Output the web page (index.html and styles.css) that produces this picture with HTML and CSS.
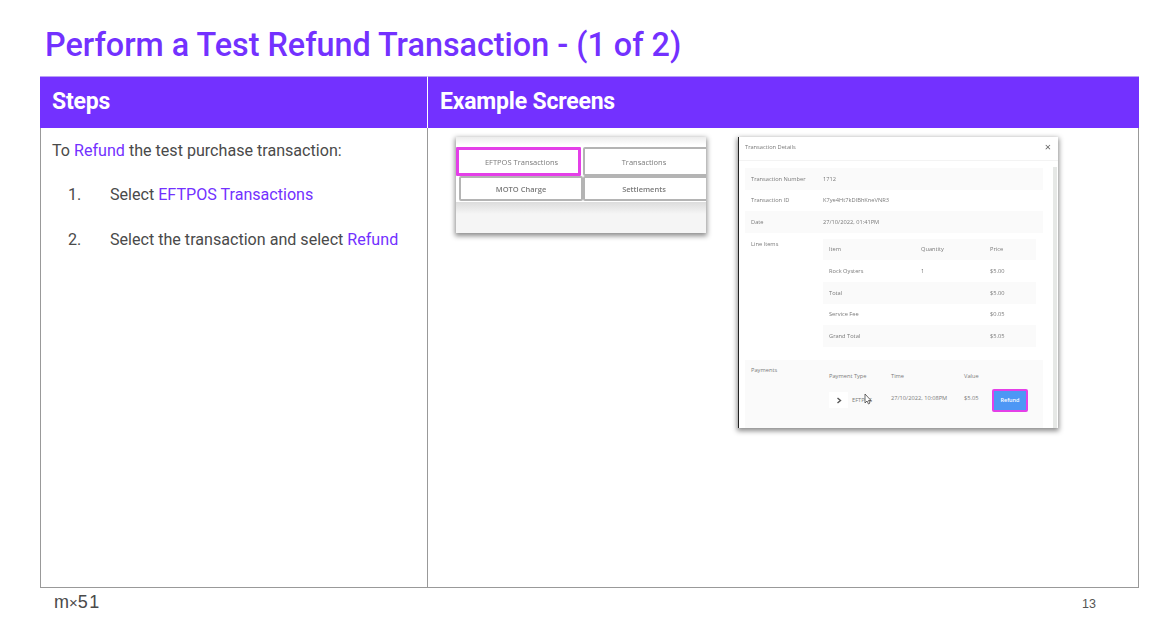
FILE: index.html
```html
<!DOCTYPE html>
<html lang="en">
<head>
<meta charset="utf-8">
<title>Perform a Test Refund Transaction</title>
<link rel="stylesheet" href="styles.css">
</head>
<body>
<main class="slide">
  <h1 class="title">Perform a Test Refund Transaction - (1 of 2)</h1>
  <section class="table">
    <div class="th th-steps">Steps</div>
    <div class="th th-screens">Example Screens</div>
    <div class="td td-steps">
      <p class="intro">To <span class="hl">Refund</span> the test purchase transaction:</p>
      <ol class="steps">
        <li><span class="num">1.</span><span>Select <span class="hl">EFTPOS Transactions</span></span></li>
        <li><span class="num">2.</span><span>Select the transaction and select <span class="hl">Refund</span></span></li>
      </ol>
    </div>
    <div class="td td-screens">
      <div class="shot menu-shot">
        <div class="menu-grid">
          <div class="menu-cell selected">EFTPOS Transactions</div>
          <div class="menu-cell right">Transactions</div>
          <div class="menu-cell strong">MOTO Charge</div>
          <div class="menu-cell right strong">Settlements</div>
        </div>
        <div class="menu-foot"></div>
      </div>
      <div class="shot dialog">
        <div class="dlg-head"><span>Transaction Details</span><span class="dlg-x">×</span></div>
        <div class="dlg-body">
          <div class="dlg-main">
            <div class="row band"><span>Transaction Number</span><span>1712</span></div>
            <div class="row"><span>Transaction ID</span><span>K7ye4Ht7kDIBhKneVNR3</span></div>
            <div class="row band"><span>Date</span><span>27/10/2022, 01:41PM</span></div>
            <div class="row line-items">
              <span class="li-label">Line Items</span>
              <div class="items">
                <div class="item band"><span>Item</span><span>Quantity</span><span>Price</span></div>
                <div class="item"><span>Rock Oysters</span><span>1</span><span>$5.00</span></div>
                <div class="item band"><span>Total</span><span></span><span>$5.00</span></div>
                <div class="item"><span>Service Fee</span><span></span><span>$0.05</span></div>
                <div class="item band"><span>Grand Total</span><span></span><span>$5.05</span></div>
              </div>
            </div>
            <div class="payments band">
              <span class="pay-label">Payments</span>
              <div class="pay-table">
                <div class="pay-row pay-head"><span>Payment Type</span><span>Time</span><span>Value</span></div>
                <div class="pay-row">
                  <span class="pay-type"><span class="chev"><svg width="6" height="7" viewBox="0 0 6 7"><path d="M1.5 1 L4.5 3.5 L1.5 6" fill="none" stroke="#555" stroke-width="1.4"/></svg></span>EFTPOS</span>
                  <span class="pay-time">27/10/2022, 10:08PM</span>
                  <span class="pay-time">$5.05</span>
                  <span class="refund">Refund</span>
                </div>
              </div>
              <svg class="cursor" width="8" height="12" viewBox="0 0 8 12"><path d="M1 1 V10 L3 8 L4.500 11 L6 10 L4.500 7.500 L7 7.500 Z" fill="#fff" stroke="#444" stroke-width="0.8"/></svg>
            </div>
          </div>
          <div class="scrollbar"></div>
        </div>
      </div>
    </div>
  </section>
  <footer class="footer">
    <span class="logo">m<span class="logo-x">×</span><span class="logo-num">51</span></span>
    <span class="page">13</span>
  </footer>
</main>
</body>
</html>
```
FILE: styles.css
```css
* { box-sizing: border-box; }
html, body { margin: 0; padding: 0; background: #fff; }
body { width: 1151px; height: 620px; overflow: hidden; font-family: Roboto, sans-serif; }
.slide { padding: 24px 12px 0 40px; }
.title {
  margin: 0 0 10px 5px;
  font-size: 32.35px; line-height: 42px; font-weight: 500;
  color: #7331ff;
}
.table {
  display: grid;
  grid-template-columns: 387px 712px;
  grid-template-rows: 52px 460px;
  width: 1099px; height: 512px;
}
.th {
  background: #7331ff; color: #fff;
  font-size: 23px; font-weight: 700; letter-spacing: -0.2px;
  display: flex; align-items: center; padding: 0 0 2px 12px;
  border-top: 1px solid #b9a0f5;
}
.th-screens { border-left: 1px solid #fff; padding-left: 12px; }
.td { border-bottom: 1px solid #999; border-right: 1px solid #999; }
.td-steps { border-left: 1px solid #999; padding: 13px 0 0 11px; border-right: 0; }
.td-screens { border-left: 1px solid #999; padding: 9px 0 0 28px; display: flex; align-items: flex-start; gap: 32px; }
.intro { margin: 0; font-size: 16.1px; line-height: 20px; color: #4a4a4a; }
.hl { color: #7331ff; }
.steps { list-style: none; margin: 0; padding: 24px 0 0 16px; font-size: 16.1px; line-height: 20px; color: #4a4a4a; }
.steps li { display: flex; margin-bottom: 25px; }
.num { width: 42px; }

.shot { background: #fff; box-shadow: 0 2px 5px 1px rgba(0,0,0,.45); font-family: "Open Sans", sans-serif; color: #7a7a7a; }
.menu-shot { width: 250px; height: 96px; padding-top: 10px; background: linear-gradient(#ececec, #fff 8px); display: flex; flex-direction: column; overflow: hidden; }
.menu-grid {
  display: grid; grid-template-columns: 124px 126px; grid-template-rows: 29px 25px;
  margin-left: 3px; width: 250px; flex: none;
  font-size: 7.5px; filter: blur(.5px);
}
.menu-cell {
  display: flex; align-items: center; justify-content: center;
  background: #fff; border: 2px solid #b4b4b4;
  border-radius: 2px;
}
.menu-cell.right { padding-right: 4px; }
.menu-cell.strong { font-weight: 600; }
.menu-cell.selected { border: 3px solid #e43fe8; margin: 0 0 0 -3px; padding-left: 6px; border-radius: 1px; width: 125px; position: relative; z-index: 1; }
.menu-foot { flex: 1; background: linear-gradient(#dcdcdc, #f5f5f5 12px); margin-top: 1px; }

.dialog { width: 320px; height: 291px; border-left: 1px solid #222; font-size: 5.7px; display: flex; flex-direction: column; overflow: hidden; }
.dlg-head { height: 24px; flex: none; display: flex; justify-content: space-between; align-items: center; padding: 0 7px 4px 6px; border-bottom: 1px solid #f3f3f3; filter: blur(.45px); }
.dlg-x { font-size: 11px; color: #666; }
.dlg-body { flex: 1; display: flex; padding: 7px 1px 0 6px; gap: 10px; min-height: 0; }
.dlg-main { flex: 1; filter: blur(.45px); }
.scrollbar { width: 4px; background: #e6e8e6; margin-top: -1px; }
.band { background: #fafafa; }
.row { display: grid; grid-template-columns: 72px 1fr; height: 21.500px; align-items: center; padding-left: 6px; }
.line-items { height: auto; align-items: start; padding-top: 6px; }
.li-label { margin-top: 1px; }
.items { margin-right: 7px; }
.item { display: grid; grid-template-columns: 92px 69px 1fr; height: 21.700px; align-items: center; padding-left: 6px; }
.payments { position: relative; margin-top: 13px; height: 70px; display: grid; grid-template-columns: 78px 1fr; padding: 6px 0 0 6px; }
.pay-table { padding-top: 4px; }
.pay-row { display: grid; grid-template-columns: 62px 73px 28px auto; align-items: center; }
.pay-head { height: 12px; margin-bottom: 7px; }
.pay-time { margin-top: -5px; }
.pay-type { display: flex; align-items: center; gap: 4px; white-space: nowrap; }
.chev { width: 19px; height: 16px; background: #fff; display: flex; align-items: center; justify-content: center; }
.refund {
  width: 36px; height: 23px; background: #4d97f5; color: #fff; border: 2px solid #e43fe8; border-radius: 2px;
  display: flex; align-items: center; justify-content: center; font-weight: 600; font-size: 5.500px;
}
.cursor { position: absolute; left: 119px; top: 33px; }
.footer { display: flex; justify-content: space-between; align-items: center; height: 30px; padding: 0 43px 1px 14px; }
.logo { font-family: "Liberation Sans", sans-serif; font-size: 18px; color: #4a4a4a; }
.logo-x { font-size: 15px; }
.logo-num { letter-spacing: 1.5px; }
.page { font-family: "Liberation Sans", sans-serif; font-size: 12.5px; color: #555; padding-top: 3px; }
```
